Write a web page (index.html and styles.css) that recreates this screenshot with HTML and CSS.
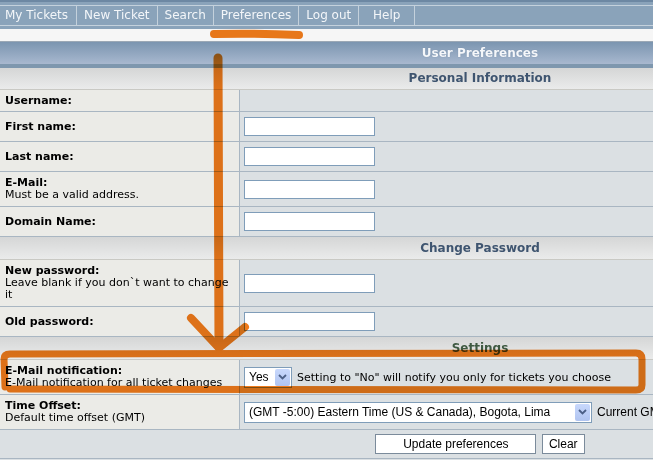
FILE: index.html
```html
<!DOCTYPE html>
<html lang="en">
<head>
  <meta charset="UTF-8">
  <meta name="viewport" content="width=device-width, initial-scale=1.0">
  <title>User Preferences</title>
  <link rel="stylesheet" href="styles.css">
</head>
<body>

  <!-- top menu -->
  <div class="topnav">
    <ul class="tabs">
      <li class="first">My Tickets</li>
      <li>New Ticket</li>
      <li>Search</li>
      <li>Preferences</li>
      <li>Log out</li>
      <li>Help</li>
    </ul>
  </div>
  <div class="subbar"></div>

  <table class="prefs">
    <tr><td colspan="2" class="title">User Preferences</td></tr>

    <tr><td colspan="2" class="section first-section">Personal Information</td></tr>
    <tr>
      <td class="label"><b>Username:</b></td>
      <td class="field"></td>
    </tr>
    <tr>
      <td class="label"><b>First name:</b></td>
      <td class="field"><input type="text"></td>
    </tr>
    <tr>
      <td class="label"><b>Last name:</b></td>
      <td class="field"><input type="text"></td>
    </tr>
    <tr>
      <td class="label"><b>E-Mail:</b><span class="note">Must be a valid address.</span></td>
      <td class="field"><input type="text"></td>
    </tr>
    <tr>
      <td class="label"><b>Domain Name:</b></td>
      <td class="field"><input type="text"></td>
    </tr>

    <tr><td colspan="2" class="section">Change Password</td></tr>
    <tr>
      <td class="label"><b>New password:</b><span class="note">Leave blank if you don`t want to change it</span></td>
      <td class="field"><input type="password"></td>
    </tr>
    <tr>
      <td class="label"><b>Old password:</b></td>
      <td class="field"><input type="password"></td>
    </tr>

    <tr><td colspan="2" class="section settings">Settings</td></tr>
    <tr>
      <td class="label"><b>E-Mail notification:</b><span class="note">E-Mail notification for all ticket changes</span></td>
      <td class="field">
        <div class="field-row">
          <span class="select select-small">
            <span class="select-text">Yes</span>
            <span class="select-btn"><svg width="9" height="6" viewBox="0 0 9 6"><polyline points="1,1 4.5,4.5 8,1" fill="none" stroke="#4b5f86" stroke-width="1.8"/></svg></span>
          </span>
          <span>Setting to "No" will notify you only for tickets you choose</span>
        </div>
      </td>
    </tr>
    <tr>
      <td class="label"><b>Time Offset:</b><span class="note">Default time offset (GMT)</span></td>
      <td class="field">
        <div class="field-row">
          <span class="select select-wide">
            <span class="select-text">(GMT -5:00) Eastern Time (US &amp; Canada), Bogota, Lima</span>
            <span class="select-btn"><svg width="9" height="6" viewBox="0 0 9 6"><polyline points="1,1 4.5,4.5 8,1" fill="none" stroke="#4b5f86" stroke-width="1.8"/></svg></span>
          </span>
          <span class="current">Current GMT offset: -5:00</span>
        </div>
      </td>
    </tr>

    <tr>
      <td colspan="2" class="buttons">
        <button class="btn btn-wide">Update preferences</button>
        <button class="btn">Clear</button>
      </td>
    </tr>
  </table>

  <!-- marker notes drawn on the screenshot -->
  <svg class="marks" width="653" height="460" viewBox="0 0 653 460">
    <g fill="none" stroke="#f07b1b" stroke-linecap="round" stroke-linejoin="round">
      <path d="M214 34 Q255 33 299 35" stroke-width="8"/>
      <path d="M218 58 L219 347" stroke-width="9"/>
      <path d="M191 318 L219 348 L245 327" stroke-width="8"/>
      <path d="M5 387 L4 359 Q4 354 10 354 L636 353 Q642 353 642 359 L642 385 Q642 390 636 390 L10 389" stroke-width="7"/>
    </g>
  </svg>

</body>
</html>
```

FILE: styles.css
```css
html, body {
  overflow: hidden;
}

body {
  margin: 0;
  font-family: "DejaVu Sans", Verdana, sans-serif;
  font-size: 11px;
  color: #000;
  background-color: #dbe0e3;
}

.topnav {
  background-color: #8aa3ba;
  border-top: 2px solid #6d88a3;
  padding: 3px 0;
}

.tabs {
  list-style: none;
  margin: 0;
  padding: 0;
  display: flex;
  border-top: 1px solid #c4d1dc;
  border-bottom: 1px solid #c4d1dc;
}

.tabs li {
  padding: 0 7px;
  min-width: 41px;
  text-align: center;
  font-size: 12px;
  line-height: 19px;
  color: #f3f6f9;
  border-right: 1px solid #c4d1dc;
}

.tabs li.first {
  padding-left: 5px;
  padding-right: 8px;
}

.subbar {
  height: 12px;
  background-color: #f6f6f6;
  border-bottom: 1px solid #9ba8b5;
}

.prefs {
  width: 960px;
  border-collapse: separate;
  border-spacing: 0;
}

.prefs td {
  padding: 0;
}

.prefs .title {
  height: 22px;
  background: linear-gradient(#7b95b0, #a8b8cf);
  border-bottom: 4px solid #7e97ae;
  text-align: center;
  font-size: 12px;
  font-weight: bold;
  color: #f5f7fa;
  text-shadow: 0 0 1px #6d84a0;
}

.prefs .section {
  line-height: 22px;
  background: linear-gradient(#d5d6d6, #eaebeb);
  border-bottom: 1px solid #c9c9c4;
  text-align: center;
  font-size: 12px;
  font-weight: bold;
  color: #3f5570;
}

.prefs .first-section {
  line-height: 21px;
}

.prefs .settings {
  color: #3f5a42;
}

.prefs .label {
  width: 229px;
  padding: 4px 5px;
  line-height: 13px;
  background-color: #ebebe7;
  border-right: 1px solid #a9b6c2;
  border-bottom: 1px solid #a9b6c2;
}

.label b {
  display: block;
}

.label .note {
  display: block;
  line-height: 12px;
  margin-bottom: 1px;
}

.prefs .field {
  padding: 4px;
  background-color: #dbe0e3;
  border-bottom: 1px solid #a9b6c2;
  vertical-align: middle;
}

.field input {
  display: block;
  box-sizing: border-box;
  width: 131px;
  height: 19px;
  margin: 1px 0;
  border: 1px solid #7f9db9;
  background-color: #fff;
}

.field-row {
  display: flex;
  align-items: center;
  gap: 5px;
  white-space: nowrap;
}

.select {
  display: inline-flex;
  align-items: center;
  box-sizing: border-box;
  height: 21px;
  border: 1px solid #7f9db9;
  background-color: #fff;
  font-family: "Liberation Sans", Arial, sans-serif;
  font-size: 12px;
}

.select-small {
  width: 48px;
}

.select-wide {
  width: 348px;
}

.select-text {
  flex: 1;
  padding-left: 4px;
  overflow: hidden;
}

.select-btn {
  display: flex;
  align-items: center;
  justify-content: center;
  width: 15px;
  height: 17px;
  margin-right: 1px;
  border-radius: 2px;
  background: linear-gradient(#c8d8fc, #b0c4f0);
}

.current {
  font-family: "Liberation Sans", Arial, sans-serif;
  font-size: 12px;
}

.prefs .buttons {
  padding: 4px 0;
  text-align: center;
  background-color: #dbe0e3;
  border-bottom: 1px solid #a9b6c2;
}

.btn {
  height: 20px;
  margin: 0 1px;
  padding: 0 6px;
  font-family: "Liberation Sans", Arial, sans-serif;
  font-size: 12px;
  color: #000;
  background-color: #fff;
  border: 1px solid #7b8b9b;
  vertical-align: middle;
}

.btn-wide {
  width: 161px;
}

.marks {
  position: absolute;
  top: 0;
  left: 0;
  pointer-events: none;
  mix-blend-mode: multiply;
}
```
